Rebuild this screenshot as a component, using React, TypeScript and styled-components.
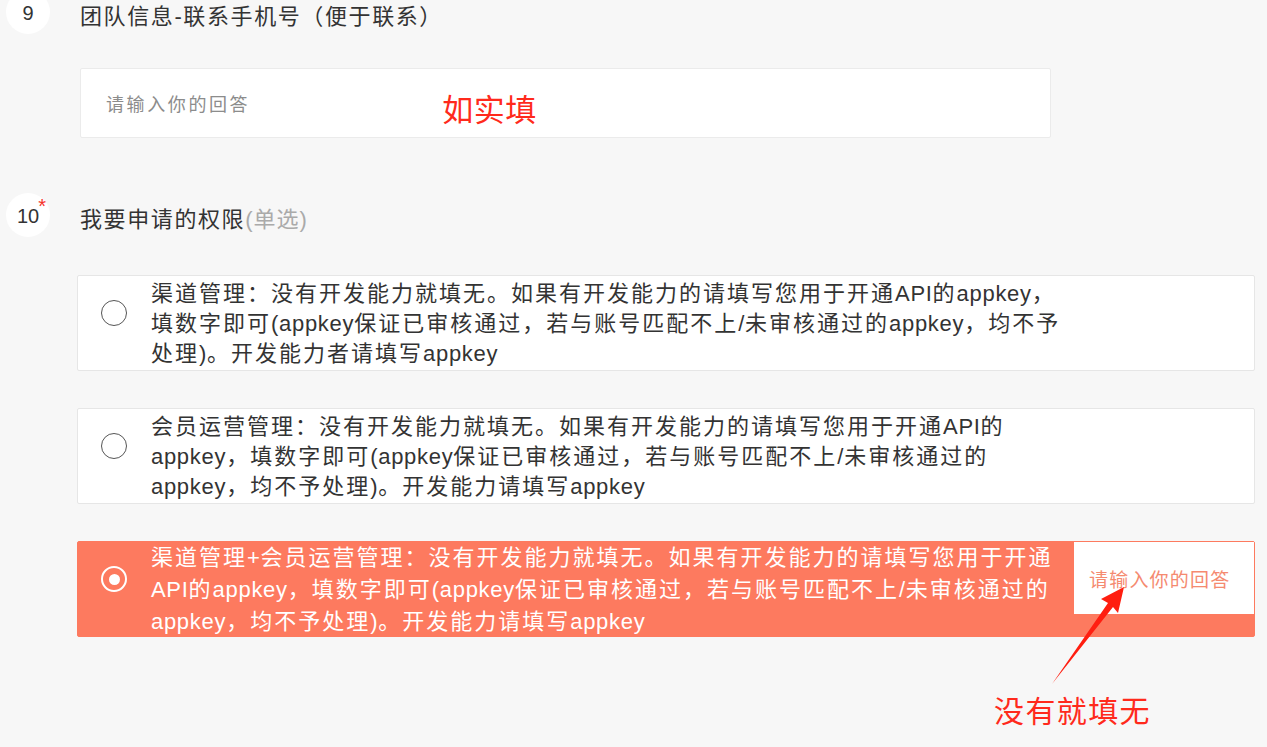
import React from "react";
import styled, { createGlobalStyle } from "styled-components";

const GlobalStyle = createGlobalStyle`
    html, body {
        margin: 0;
        padding: 0;
        background: #f7f7f7;
        overflow: hidden;
        font-family: "Liberation Sans", "Noto Sans CJK SC", sans-serif;
        color: #333;
    }
`;

const Page = styled.div`
    position: relative;
    width: 1267px;
    height: 757px;
    margin-top: -10px;
`;

const Question = styled.section<{ $gap?: number }>`
    display: flex;
    flex-direction: column;
    margin-top: ${(p) => p.$gap || 0}px;
`;

const QHeader = styled.div`
    display: flex;
    align-items: center;
    padding-left: 6px;
    gap: 30px;
`;

const Badge = styled.div`
    position: relative;
    width: 44px;
    height: 44px;
    border-radius: 50%;
    background: #fff;
    display: flex;
    align-items: center;
    justify-content: center;
    font-size: 20px;
    color: #333;
    padding-top: 2px;
    box-sizing: border-box;
`;

const Star = styled.span`
    position: absolute;
    top: 3px;
    right: 4px;
    color: #f5322a;
    font-size: 20px;
    line-height: 1;
`;

const QTitle = styled.h2`
    margin: 0;
    padding-top: 4px;
    font-size: 22px;
    font-weight: normal;
    letter-spacing: 1.6px;
    color: #333;
`;

const Hint = styled.span`
    color: #aaa;
    letter-spacing: 1px;
`;

const Body = styled.div<{ $top: number }>`
    display: flex;
    flex-direction: column;
    gap: 37px;
    padding-left: 77px;
    margin-top: ${(p) => p.$top}px;
`;

const AnswerBox = styled.div`
    display: flex;
    align-items: center;
    width: 971px;
    height: 70px;
    margin-left: 3px;
    box-sizing: border-box;
    background: #fff;
    border: 1px solid #ebebeb;
    border-radius: 2px;
    padding-left: 25px;
`;

const Placeholder = styled.span`
    font-size: 18px;
    letter-spacing: 2.6px;
    color: #8c8c8c;
`;

const Note = styled.span`
    font-size: 31px;
    letter-spacing: 0.5px;
    color: #ff2a1c;
    margin-left: 192px;
    margin-top: 8px;
`;

const Option = styled.div<{ $selected?: boolean }>`
    display: flex;
    align-items: flex-start;
    width: 1178px;
    height: 96px;
    box-sizing: border-box;
    padding-left: 23px;
    gap: 24px;
    border-radius: 2px;
    background: ${(p) => (p.$selected ? "#fd7a5f" : "#fff")};
    border: 1px solid ${(p) => (p.$selected ? "#fd7a5f" : "#e6e6e6")};
    color: ${(p) => (p.$selected ? "#fff" : "#333")};
`;

const Radio = styled.span<{ $selected?: boolean }>`
    flex: none;
    margin-top: 24px;
    width: 26px;
    height: 26px;
    box-sizing: border-box;
    border-radius: 50%;
    border: ${(p) => (p.$selected ? "2px solid #fff" : "1.5px solid #555")};
    display: flex;
    align-items: center;
    justify-content: center;

    &::after {
        content: "";
        display: ${(p) => (p.$selected ? "block" : "none")};
        width: 11px;
        height: 11px;
        border-radius: 50%;
        background: #fff;
    }
`;

const OptionText = styled.div<{ $selected?: boolean }>`
    flex: 1;
    min-width: 0;
    font-size: 22px;
    letter-spacing: 2px;
    line-height: ${(p) => (p.$selected ? 32 : 30)}px;
    padding-top: ${(p) => (p.$selected ? 0 : 3)}px;
`;

const Line = styled.span`
    display: block;
    white-space: nowrap;
`;

const Latin = styled.span`
    letter-spacing: 0.7px;
`;

const OtherInput = styled.div`
    flex: none;
    width: 180px;
    height: 72px;
    background: #fff;
    display: flex;
    align-items: center;
    padding-left: 15px;
    box-sizing: border-box;
    font-size: 19px;
    letter-spacing: 1.2px;
    color: #f58a70;
`;

const Arrow = styled.svg`
    position: absolute;
    left: 1040px;
    top: 590px;
`;

const Callout = styled.div`
    position: absolute;
    left: 994px;
    top: 697px;
    font-size: 30px;
    letter-spacing: 1.4px;
    color: #ff2a1c;
`;

const options = [
    {
        lines: [
            "渠道管理：没有开发能力就填无。如果有开发能力的请填写您用于开通API的appkey，",
            "填数字即可(appkey保证已审核通过，若与账号匹配不上/未审核通过的appkey，均不予",
            "处理)。开发能力者请填写appkey",
        ],
    },
    {
        lines: [
            "会员运营管理：没有开发能力就填无。如果有开发能力的请填写您用于开通API的",
            "appkey，填数字即可(appkey保证已审核通过，若与账号匹配不上/未审核通过的",
            "appkey，均不予处理)。开发能力请填写appkey",
        ],
    },
    {
        lines: [
            "渠道管理+会员运营管理：没有开发能力就填无。如果有开发能力的请填写您用于开通",
            "API的appkey，填数字即可(appkey保证已审核通过，若与账号匹配不上/未审核通过的",
            "appkey，均不予处理)。开发能力请填写appkey",
        ],
        selected: true,
    },
];

// latin runs get tighter spacing than the CJK text around them
function renderLine(text: string) {
    return text.split(/([A-Za-z()/+]+)/).map((part, i) =>
        /^[A-Za-z()/+]+$/.test(part) ? <Latin key={i}>{part}</Latin> : part
    );
}

export default function App() {
    return (
        <>
            <GlobalStyle />
            <Page>
                <Question>
                    <QHeader>
                        <Badge>9</Badge>
                        <QTitle>团队信息-联系手机号（便于联系）</QTitle>
                    </QHeader>
                    <Body $top={34}>
                        <AnswerBox>
                            <Placeholder>请输入你的回答</Placeholder>
                            <Note>如实填</Note>
                        </AnswerBox>
                    </Body>
                </Question>

                <Question $gap={55}>
                    <QHeader>
                        <Badge>
                            10<Star>*</Star>
                        </Badge>
                        <QTitle>
                            我要申请的权限<Hint>(单选)</Hint>
                        </QTitle>
                    </QHeader>
                    <Body $top={38}>
                        {options.map((o, i) => (
                            <Option key={i} $selected={o.selected}>
                                <Radio $selected={o.selected} />
                                <OptionText $selected={o.selected}>
                                    {o.lines.map((l, j) => (
                                        <Line key={j}>{renderLine(l)}</Line>
                                    ))}
                                </OptionText>
                                {o.selected && <OtherInput>请输入你的回答</OtherInput>}
                            </Option>
                        ))}
                    </Body>
                </Question>

                <Arrow width="100" height="110" viewBox="0 0 100 110">
                    <polygon
                        points="84,7 61,19 68,23 12,104 73,27 78,33"
                        fill="#ff1e10"
                    />
                </Arrow>
                <Callout>没有就填无</Callout>
            </Page>
        </>
    );
}
